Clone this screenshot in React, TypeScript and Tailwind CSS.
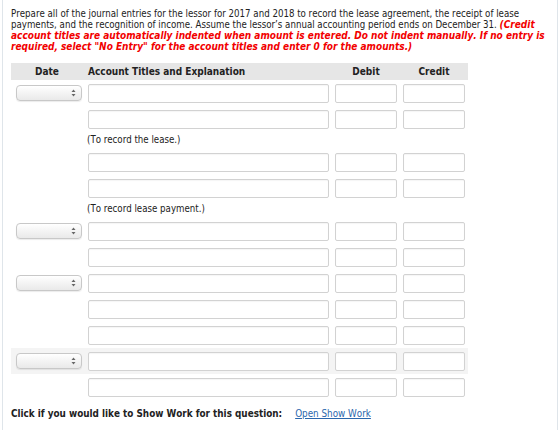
import React from 'react';

type Row =
  | { kind: 'entry'; date?: boolean; highlight?: boolean }
  | { kind: 'note'; text: string };

const rows: Row[] = [
  { kind: 'entry', date: true },
  { kind: 'entry' },
  { kind: 'note', text: '(To record the lease.)' },
  { kind: 'entry' },
  { kind: 'entry' },
  { kind: 'note', text: '(To record lease payment.)' },
  { kind: 'entry', date: true },
  { kind: 'entry' },
  { kind: 'entry', date: true },
  { kind: 'entry' },
  { kind: 'entry' },
  { kind: 'entry', date: true, highlight: true },
  { kind: 'entry' },
];

const font = { fontFamily: "Tahoma, 'DejaVu Sans Condensed', 'DejaVu Sans', sans-serif" };

function DateSelect() {
  return (
    <div className="w-[66px] h-[16px] ml-[5px] mt-[-2px] rounded-[4px] border border-[#c8c8c8] bg-gradient-to-b from-[#ffffff] to-[#e9e9e9] shadow-[0_1px_1px_rgba(0,0,0,0.08)] flex items-center justify-end pr-[5px]">
      <svg width="5" height="8" viewBox="0 0 5 8">
        <path d="M2.5 0.5 L4.5 3 L0.5 3 Z" fill="#666" />
        <path d="M2.5 7.5 L4.5 5 L0.5 5 Z" fill="#666" />
      </svg>
    </div>
  );
}

function Field({ w }: { w: string }) {
  return <div className={`${w} h-[19px] rounded-[2px] border border-[#d2d2d2] bg-white shadow-[inset_0_1px_1px_rgba(0,0,0,0.04)]`} />;
}

export default function App() {
  return (
    <div className="w-[560px] h-[430px] bg-white overflow-hidden text-[#222] [font-kerning:none]" style={font}>
      <div className="ml-[2px] w-[556px] h-full border-x border-[#dfe5ea] pl-[8px] pt-[8px]">
        <p className="text-[9.65px] leading-[11px] w-[544px]">
          Prepare all of the journal entries for the lessor for 2017 and 2018 to record the lease agreement, the receipt of lease
          payments, and the recognition of income. Assume the lessor’s annual accounting period ends on December 31.{' '}
          <span className="text-[#f20000] text-[10px] leading-[11px] font-bold italic">
            (Credit account titles are automatically indented when amount is entered. Do not indent manually. If no entry is
            required, select "No Entry" for the account titles and enter 0 for the amounts.)
          </span>
        </p>

        <div className="mt-[11px] w-[457px]">
          <div className="flex h-[17px] items-center bg-[#e6e6e6] text-[10px] font-bold">
            <div className="w-[72px] text-center">Date</div>
            <div className="w-[5px]" />
            <div className="w-[247px]">Account Titles and Explanation</div>
            <div className="w-[62px] text-center">Debit</div>
            <div className="w-[6px]" />
            <div className="w-[62px] text-center">Credit</div>
          </div>

          {rows.map((r, i) =>
            r.kind === 'note' ? (
              <div key={i} className="flex h-[17px] items-center text-[9.65px]">
                <div className="w-[76px]" />
                <div>{r.text}</div>
              </div>
            ) : (
              <div
                key={i}
                className={`flex h-[26px] items-center gap-[6px] pt-[1px] ${r.highlight ? 'bg-[#f4f4f4]' : ''}`}
              >
                <div className="w-[71px] flex items-center">{r.date && <DateSelect />}</div>
                <Field w="w-[241px]" />
                <Field w="w-[62px]" />
                <Field w="w-[62px]" />
              </div>
            )
          )}

          <div className="mt-[7px] flex items-center">
            <span className="font-bold text-[9.85px]">Click if you would like to Show Work for this question:</span>
            <span className="ml-[13px] text-[9.8px] text-[#2a67ad] underline">Open Show Work</span>
          </div>
        </div>
      </div>
    </div>
  );
}
